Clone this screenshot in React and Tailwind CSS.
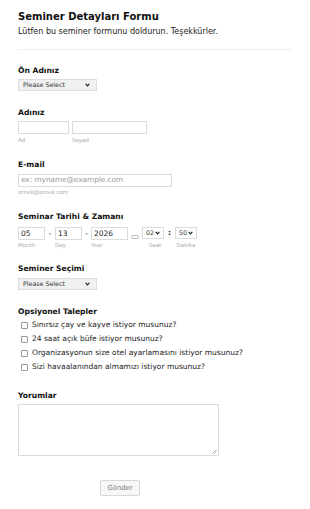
import React from "react";

const font = { fontFamily: '"DejaVu Sans", Verdana, sans-serif' };

function Chevron() {
  return (
    <svg width="5" height="4" viewBox="0 0 5 4" className="shrink-0">
      <path d="M0.7 0.8 L2.5 2.8 L4.3 0.8" fill="none" stroke="#222" strokeWidth="1.2" />
    </svg>
  );
}

function FakeSelect({ text, className = "" }) {
  return (
    <div
      className={`flex items-center justify-between border border-[#dcdcdc] bg-[#f0f0f0] pl-[4px] pr-[6px] text-[6.3px] text-[#333] ${className}`}
    >
      <span>{text}</span>
      <Chevron />
    </div>
  );
}

function Label({ children, className = "" }) {
  return (
    <div className={`h-[10px] leading-[10px] text-[7.6px] font-bold text-[#111] ${className}`}>
      {children}
    </div>
  );
}

function Sub({ children, className = "" }) {
  return (
    <div className={`h-[8px] leading-[8px] text-[5.5px] text-[#aaa] ${className}`}>
      {children}
    </div>
  );
}

const box = "h-[13px] border border-[#dcdcdc] flex items-center";

export default function App() {
  const requests = [
    "Sınırsız çay ve kayve istiyor musunuz?",
    "24 saat açık büfe istiyor musunuz?",
    "Organizasyonun size otel ayarlamasını istiyor musunuz?",
    "Sizi havaalanından almamızı istiyor musunuz?",
  ];

  return (
    <div className="w-[310px] h-[509px] bg-white overflow-hidden" style={font}>
      <div className="px-[18px] pt-[11px]">
        {/* header */}
        <div className="h-[12px] leading-[12px] text-[10px] font-bold text-[#111]">
          Seminer Detayları Formu
        </div>
        <div className="h-[10px] leading-[10px] mt-[4px] text-[8px] text-[#222]">
          Lütfen bu seminer formunu doldurun. Teşekkürler.
        </div>
        <div className="h-px bg-[#eeeeee] mt-[12px] w-[274px]" />

        {/* Ön Adınız */}
        <Label className="mt-[16px]">Ön Adınız</Label>
        <FakeSelect text="Please Select" className="mt-[3px] w-[79px] h-[12px]" />

        {/* Adınız */}
        <Label className="mt-[17px]">Adınız</Label>
        <div className="flex gap-[3px] mt-[3px]">
          <div>
            <div className={`${box} w-[51px]`} />
            <Sub className="mt-[2px]">Ad</Sub>
          </div>
          <div>
            <div className={`${box} w-[75px]`} />
            <Sub className="mt-[2px]">Soyad</Sub>
          </div>
        </div>

        {/* E-mail */}
        <Label className="mt-[16px]">E-mail</Label>
        <div className={`${box} mt-[4px] w-[154px] px-[2px] text-[7.3px] text-[#999]`}>
          ex: myname@example.com
        </div>
        <Sub className="mt-[1px]">ornek@ornek.com</Sub>

        {/* Tarih */}
        <Label className="mt-[16px]">Seminar Tarihi &amp; Zamanı</Label>
        <div className="flex items-start mt-[5px]">
          <div>
            <div className={`${box} w-[27px] px-[2px] text-[7.5px] text-[#222]`}>05</div>
            <Sub className="mt-[1px]">Month</Sub>
          </div>
          <div className="w-[10px] h-[13px] flex items-center justify-center text-[7.5px] text-[#222]">-</div>
          <div>
            <div className={`${box} w-[27px] px-[2px] text-[7.5px] text-[#222]`}>13</div>
            <Sub className="mt-[1px]">Day</Sub>
          </div>
          <div className="w-[9px] h-[13px] flex items-center justify-center text-[7.5px] text-[#222]">-</div>
          <div>
            <div className={`${box} w-[37px] px-[2px] text-[7.5px] text-[#222]`}>2026</div>
            <Sub className="mt-[1px]">Year</Sub>
          </div>
          <div className="w-[14px] h-[13px] flex items-end justify-center pb-[1px]">
            <div className="w-[8px] h-[4px] rounded-full border border-[#bbb]" />
          </div>
          <div className="flex flex-col items-center">
            <div className="w-[22px] h-[12px] border border-[#dcdcdc] flex items-center justify-between pl-[3px] pr-[3px] text-[6.3px] text-[#333]">
              <span>02</span>
              <Chevron />
            </div>
            <Sub className="mt-[2px] pl-[4px]">Saat</Sub>
          </div>
          <div className="w-[11px] h-[12px] flex items-center justify-center text-[7.5px] font-bold text-[#222]">:</div>
          <div className="flex flex-col items-center">
            <div className="w-[22px] h-[12px] border border-[#dcdcdc] flex items-center justify-between pl-[3px] pr-[3px] text-[6.3px] text-[#333]">
              <span>50</span>
              <Chevron />
            </div>
            <Sub className="mt-[2px]">Dakika</Sub>
          </div>
        </div>

        {/* Seminer Seçimi */}
        <Label className="mt-[15px]">Seminer Seçimi</Label>
        <FakeSelect text="Please Select" className="mt-[4px] w-[79px] h-[12px]" />

        {/* Opsiyonel */}
        <Label className="mt-[17px]">Opsiyonel Talepler</Label>
        <div className="mt-[1px] flex flex-col">
          {requests.map((r) => (
            <div key={r} className="flex items-center h-[14px]">
              <div className="w-[7px] h-[7px] ml-[3px] border border-[#999] rounded-[1px]" />
              <span className="ml-[4px] text-[7.5px] text-[#222] leading-none">{r}</span>
            </div>
          ))}
        </div>

        {/* Yorumlar */}
        <Label className="mt-[17px]">Yorumlar</Label>
        <div className="relative mt-[3px] w-[201px] h-[52px] border border-[#dcdcdc]">
          <svg width="5" height="5" viewBox="0 0 5 5" className="absolute right-[1px] bottom-[1px]">
            <path d="M4.5 0.5 L0.5 4.5 M4.5 2.5 L2.5 4.5" stroke="#999" strokeWidth="0.8" />
          </svg>
        </div>

        {/* Gönder */}
        <div className="mt-[24px] pl-[82px]">
          <div className="w-[40px] h-[16px] border border-[#d8d8d8] rounded-[2px] bg-[#f7f7f7] flex items-center justify-center text-[6.8px] text-[#777]">
            Gönder
          </div>
        </div>
      </div>
    </div>
  );
}
